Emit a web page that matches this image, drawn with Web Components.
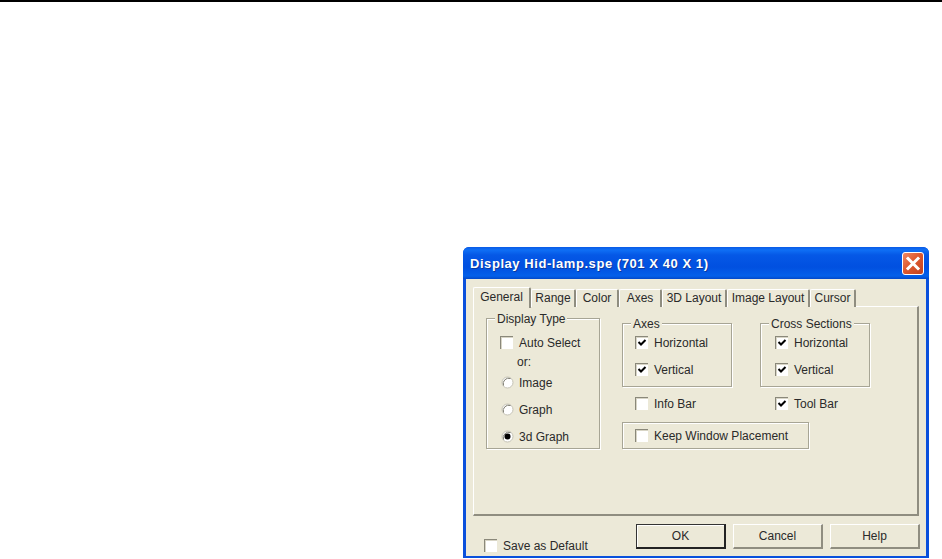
<!DOCTYPE html>
<html>
<head>
<meta charset="utf-8">
<title>Display dialog</title>
<style>
    html, body { margin: 0; padding: 0; background: #fff; }
    body { height: 559px; overflow: hidden; font-family: "Liberation Sans", Arial, sans-serif; font-size: 12px; color: #2a2a2a; }
</style>
</head>
<body>
<xp-page>
    <xp-dialog caption="Display Hid-lamp.spe (701 X 40 X 1)">
        <xp-tabs slot="tabs"></xp-tabs>
        <div slot="page-left">
            <xp-group label="Display Type" style="width:114px;height:131px">
                <div style="display:flex;flex-direction:column;padding:17px 0 0 13px">
                    <xp-check label="Auto Select"></xp-check>
                    <span style="margin:5px 0 0 17px;height:16px;line-height:16px">or:</span>
                    <xp-radio label="Image" style="margin-top:6px"></xp-radio>
                    <xp-radio label="Graph" style="margin-top:14px"></xp-radio>
                    <xp-radio label="3d Graph" on style="margin-top:14px"></xp-radio>
                </div>
            </xp-group>
        </div>
        <div slot="page-right" style="display:flex;flex-direction:column">
            <div style="display:flex;gap:28px;margin-top:5px">
                <xp-group label="Axes" style="width:110px;height:64px">
                    <div style="display:flex;flex-direction:column;gap:14px;padding:12px 0 0 12px">
                        <xp-check label="Horizontal" on></xp-check>
                        <xp-check label="Vertical" on></xp-check>
                    </div>
                </xp-group>
                <xp-group label="Cross Sections" style="width:110px;height:64px">
                    <div style="display:flex;flex-direction:column;gap:14px;padding:12px 0 0 14px">
                        <xp-check label="Horizontal" on></xp-check>
                        <xp-check label="Vertical" on></xp-check>
                    </div>
                </xp-group>
            </div>
            <div style="display:flex;margin:10px 0 0 13px">
                <xp-check label="Info Bar" style="width:140px"></xp-check>
                <xp-check label="Tool Bar" on></xp-check>
            </div>
            <xp-group style="width:187px;height:27px;margin-top:12px">
                <div style="padding:6px 0 0 12px"><xp-check label="Keep Window Placement"></xp-check></div>
            </xp-group>
        </div>
        <xp-check slot="footer-left" label="Save as Default"></xp-check>
        <xp-button slot="buttons">OK</xp-button>
        <xp-button slot="buttons">Cancel</xp-button>
        <xp-button slot="buttons">Help</xp-button>
    </xp-dialog>
</xp-page>

<script>
    // The document: black rule on top, the dialog sits low on the right
    class XpPage extends HTMLElement {
        constructor() {
            super();
            this.attachShadow({ mode: 'open' });
            this.shadowRoot.innerHTML = `
                <style>
                    :host { display: block; width: 942px; height: 559px; }
                    .rule { height: 2px; background: #000; }
                    .desk { padding: 245px 0 0 463px; }
                </style>
                <div class="rule"></div>
                <div class="desk"><slot></slot></div>
            `;
        }
    }

    class XpDialog extends HTMLElement {
        constructor() {
            super();
            this.attachShadow({ mode: 'open' });
            this.shadowRoot.innerHTML = `
                <style>
                    :host {
                        display: block;
                        width: 466px;
                        height: 311px;
                        box-sizing: border-box;
                        background: #0a50dc;
                        border-radius: 6px 6px 0 0;
                        overflow: hidden;
                    }
                    .title {
                        height: 32px;
                        box-sizing: border-box;
                        padding: 0 5px 0 7px;
                        display: flex;
                        align-items: center;
                        justify-content: space-between;
                        background: linear-gradient(#0a5be6 0, #0f6ff5 3px, #0558e6 8px, #0150e0 20px, #0460ea 29px, #0348c8 32px);
                        color: #fff;
                        font-weight: bold;
                        font-size: 13px;
                        letter-spacing: .56px;
                        text-shadow: 1px 1px 0 #0b3aa0;
                    }
                    .close { display: block; width: 22px; height: 23px; }
                    .client {
                        margin: 0 3px;
                        height: 277px;
                        background: #ece9d8;
                        padding: 7px 7px 0 7px;
                        box-sizing: border-box;
                    }
                    .page {
                        height: 210px;
                        box-sizing: border-box;
                        margin-top: -1px;
                        background: #ece9d8;
                        border-top: 1px solid #fff;
                        border-left: 1px solid #fff;
                        border-right: 2px solid #8f8d80;
                        border-bottom: 2px solid #8f8d80;
                        padding: 11px 0 0 12px;
                        display: flex;
                        gap: 22px;
                    }
                    .footer { display: flex; justify-content: space-between; padding-top: 8px; }
                    .footer-left { padding: 15px 0 0 11px; }
                    .buttons { display: flex; gap: 7px; margin-right: -1px; }
                </style>
                <div class="title">
                    <span id="cap"></span>
                    <svg class="close" viewBox="0 0 22 23">
                        <defs>
                            <linearGradient id="red" x1="0" y1="0" x2="1" y2="1">
                                <stop offset="0" stop-color="#ee8a68"/>
                                <stop offset=".45" stop-color="#df5a30"/>
                                <stop offset="1" stop-color="#c2401c"/>
                            </linearGradient>
                        </defs>
                        <rect x=".5" y=".5" width="21" height="22" rx="2.5" fill="url(#red)" stroke="#fff"/>
                        <path d="M6 6.5 L16 16.5 M16 6.5 L6 16.5" stroke="#fff" stroke-width="3" stroke-linecap="square"/>
                    </svg>
                </div>
                <div class="client">
                    <slot name="tabs"></slot>
                    <div class="page">
                        <slot name="page-left"></slot>
                        <slot name="page-right"></slot>
                    </div>
                    <div class="footer">
                        <div class="footer-left"><slot name="footer-left"></slot></div>
                        <div class="buttons"><slot name="buttons"></slot></div>
                    </div>
                </div>
            `;
        }

        connectedCallback() {
            this.shadowRoot.getElementById('cap').textContent = this.getAttribute('caption');
        }
    }

    class XpTabs extends HTMLElement {
        constructor() {
            super();
            this.attachShadow({ mode: 'open' });
            const names = [['General', 58], ['Range', 45], ['Color', 43], ['Axes', 43], ['3D Layout', 65], ['Image Layout', 83], ['Cursor', 46]];
            const tabs = names.map(([n, w], i) =>
                `<div class="tab${i === 0 ? ' on' : ''}" style="width:${w}px">${n}</div>`).join('');
            this.shadowRoot.innerHTML = `
                <style>
                    :host { display: flex; align-items: flex-end; height: 21px; position: relative; z-index: 1; }
                    .tab {
                        box-sizing: border-box;
                        height: 18px;
                        line-height: 17px;
                        text-align: center;
                        border-top: 1px solid #fff;
                        border-left: 1px solid #fff;
                        border-right: 2px solid #8f8d80;
                        border-radius: 2px 2px 0 0;
                        background: #ece9d8;
                        white-space: nowrap;
                    }
                    .tab.on { height: 21px; line-height: 19px; margin-bottom: -1px; }
                </style>
                ${tabs}
            `;
        }
    }

    // Etched group box, the caption lies over its top border
    class XpGroup extends HTMLElement {
        constructor() {
            super();
            this.attachShadow({ mode: 'open' });
            this.shadowRoot.innerHTML = `
                <style>
                    :host {
                        display: block;
                        position: relative;
                        box-sizing: border-box;
                        border: 1px solid #a7a595;
                        box-shadow: 1px 1px 0 #fff, inset 1px 1px 0 #fff;
                    }
                    .cap {
                        position: absolute;
                        left: 8px;
                        top: -6px;
                        padding: 0 2px 0 2px;
                        line-height: 13px;
                        background: #ece9d8;
                    }
                    .cap:empty { display: none; }
                </style>
                <div class="cap" id="cap"></div>
                <slot></slot>
            `;
        }

        connectedCallback() {
            this.shadowRoot.getElementById('cap').textContent = this.getAttribute('label') || '';
        }
    }

    class XpCheck extends HTMLElement {
        constructor() {
            super();
            this.attachShadow({ mode: 'open' });
            this.shadowRoot.innerHTML = `
                <style>
                    :host { display: flex; align-items: center; gap: 6px; height: 13px; white-space: nowrap; }
                    .box {
                        width: 13px;
                        height: 13px;
                        flex: none;
                        box-sizing: border-box;
                        background: #fff;
                        border-top: 1px solid #8a887a;
                        border-left: 1px solid #8a887a;
                        box-shadow: inset 1px 1px 0 #d8d5c6;
                    }
                    svg { display: block; width: 12px; height: 12px; }
                </style>
                <div class="box" id="box"></div>
                <span id="lab"></span>
            `;
        }

        connectedCallback() {
            this.shadowRoot.getElementById('lab').textContent = this.getAttribute('label');
            if (this.hasAttribute('on')) {
                this.shadowRoot.getElementById('box').innerHTML =
                    '<svg viewBox="0 0 12 12"><path d="M2.5 5 L5 7.5 L9.5 3" fill="none" stroke="#000" stroke-width="2"/></svg>';
            }
        }
    }

    class XpRadio extends HTMLElement {
        constructor() {
            super();
            this.attachShadow({ mode: 'open' });
            this.shadowRoot.innerHTML = `
                <style>
                    :host { display: flex; align-items: center; height: 13px; gap: 5px; padding-left: 1px; white-space: nowrap; }
                    svg { display: block; width: 13px; height: 13px; flex: none; }
                </style>
                <svg viewBox="0 0 13 13" id="dot">
                    <circle cx="6.5" cy="6.5" r="5.5" fill="#fff" stroke="#c4c2b4"/>
                    <path d="M2.5 9.5 A5.5 5.5 0 0 1 9.5 2.5" fill="none" stroke="#7d7b6e"/>
                </svg>
                <span id="lab"></span>
            `;
        }

        connectedCallback() {
            this.shadowRoot.getElementById('lab').textContent = this.getAttribute('label');
            if (this.hasAttribute('on')) {
                const c = document.createElementNS('http://www.w3.org/2000/svg', 'circle');
                c.setAttribute('cx', '6.5');
                c.setAttribute('cy', '6.5');
                c.setAttribute('r', '3');
                this.shadowRoot.getElementById('dot').appendChild(c);
            }
        }
    }

    class XpButton extends HTMLElement {
        constructor() {
            super();
            this.attachShadow({ mode: 'open' });
            this.shadowRoot.innerHTML = `
                <style>
                    :host {
                        display: flex;
                        align-items: center;
                        justify-content: center;
                        box-sizing: border-box;
                        width: 90px;
                        height: 25px;
                        background: #ece9d8;
                        border-top: 1px solid #fff;
                        border-left: 1px solid #fff;
                        border-right: 2px solid #8f8d80;
                        border-bottom: 2px solid #8f8d80;
                    }
                    :host(:first-of-type) {
                        border-top: 1px solid #333;
                        border-left: 1px solid #333;
                        border-right: 2px solid #222;
                        border-bottom: 2px solid #222;
                        box-shadow: inset 1px 1px 0 #fff;
                    }
                </style>
                <slot></slot>
            `;
        }
    }

    customElements.define('xp-page', XpPage);
    customElements.define('xp-dialog', XpDialog);
    customElements.define('xp-tabs', XpTabs);
    customElements.define('xp-group', XpGroup);
    customElements.define('xp-check', XpCheck);
    customElements.define('xp-radio', XpRadio);
    customElements.define('xp-button', XpButton);
</script>
</body>
</html>
